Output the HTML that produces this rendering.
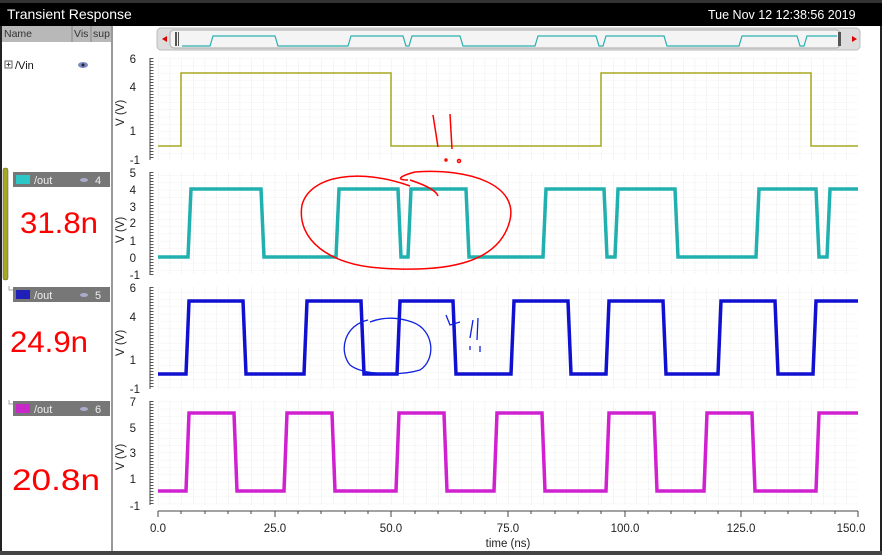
<!DOCTYPE html>
<html><head><meta charset="utf-8"><style>
body{margin:0;width:882px;height:555px;overflow:hidden;background:#fff;font-family:"Liberation Sans",sans-serif;}
</style></head><body>
<svg width="882" height="555" xmlns="http://www.w3.org/2000/svg" font-family="Liberation Sans, sans-serif">
<defs>
<pattern id="g" x="158" y="0" width="11.667" height="7.3" patternUnits="userSpaceOnUse">
<path d="M0 0V7.3" stroke="#dcdcdc" stroke-width="1" stroke-dasharray="1 1"/>
<path d="M0 0H11.667" stroke="#e6e6e6" stroke-width="1" stroke-dasharray="1 1"/>
</pattern>
</defs>
<rect width="882" height="555" fill="#fff"/>
<rect x="0" y="0" width="882" height="26" fill="#000"/>
<rect x="0" y="0" width="882" height="3" fill="#333"/>
<text x="7" y="19" fill="#fff" font-size="14">Transient Response</text>
<text x="708" y="19" fill="#fff" font-size="12.5">Tue Nov 12 12:38:56 2019</text>
<rect x="0" y="26" width="2" height="529" fill="#222"/>
<rect x="880" y="26" width="2" height="529" fill="#222"/>
<rect x="0" y="551" width="882" height="4" fill="#444"/>
<rect x="2" y="26" width="110" height="16" fill="#b8b8b8"/>
<text x="4" y="37" font-size="10.5" fill="#333">Name</text>
<line x1="72" y1="26" x2="72" y2="42" stroke="#888"/>
<line x1="91" y1="26" x2="91" y2="42" stroke="#888"/>
<text x="74" y="37" font-size="10.5" fill="#333">Vis</text>
<text x="93" y="37" font-size="10.5" fill="#333">sup</text>
<line x1="112" y1="26" x2="112" y2="551" stroke="#999" stroke-width="2"/>
<rect x="5" y="61" width="7" height="7" fill="none" stroke="#666"/>
<path d="M6.5 64.5h4M8.5 62.5v4" stroke="#444"/>
<text x="15" y="69" font-size="11" fill="#111">/Vin</text>
<ellipse cx="83" cy="65" rx="5" ry="3" fill="#7a8ac0"/><circle cx="83" cy="65" r="1.5" fill="#223"/>
<rect x="3" y="168" width="5" height="112" rx="2" fill="#a8a820" stroke="#555" stroke-width="0.5"/>
<g font-size="11" fill="#eee">
<rect x="13" y="172" width="97" height="15" fill="#777"/><rect x="16" y="175" width="14" height="9" fill="#2cc8c8"/><text x="34" y="184">/out</text><text x="95" y="184">4</text><ellipse cx="84" cy="180" rx="4" ry="2" fill="#aac"/>
<rect x="13" y="287" width="97" height="15" fill="#777"/><rect x="16" y="290" width="14" height="9" fill="#2020b8"/><text x="34" y="299">/out</text><text x="95" y="299">5</text><ellipse cx="84" cy="295" rx="4" ry="2" fill="#aac"/>
<rect x="13" y="401" width="97" height="15" fill="#777"/><rect x="16" y="404" width="14" height="9" fill="#c828c8"/><text x="34" y="413">/out</text><text x="95" y="413">6</text><ellipse cx="84" cy="409" rx="4" ry="2" fill="#aac"/>
</g>
<path d="M9 286v4h4M9 400v4h4" stroke="#aaa" fill="none"/>
<g fill="#f00" font-size="30">
<text x="20" y="233" textLength="78" lengthAdjust="spacingAndGlyphs">31.8n</text>
<text x="10" y="352" textLength="78" lengthAdjust="spacingAndGlyphs">24.9n</text>
<text x="12" y="490" textLength="88" lengthAdjust="spacingAndGlyphs">20.8n</text>
</g>
<rect x="157" y="28" width="703" height="22" rx="4" fill="#ddd" stroke="#bbb"/>
<rect x="170" y="30" width="670" height="18" rx="4" fill="#f4f4f4" stroke="#aaa"/>
<path d="M162 39l5-3v6z" fill="#d00"/><path d="M852 36l5 3-5 3z" fill="#d00"/>
<rect x="175" y="32" width="2" height="14" fill="#555"/><rect x="178" y="32" width="1" height="14" fill="#555"/>
<rect x="838" y="32" width="3" height="14" fill="#555"/>
<path d="M182 46H210l3-10h62l3 10h70l3-10h52l3 10 3 0 3-10h48l3 10h72l3-10h58l3 10 4 0 3-10h58l3 10h72l3-10h55l3 10 4 0 3-10h30" fill="none" stroke="#2ab0b0" stroke-width="1.2"/>
<rect x="158" y="58" width="700" height="102" fill="url(#g)"/>
<rect x="158" y="172" width="700" height="102" fill="url(#g)"/>
<rect x="158" y="287" width="700" height="102" fill="url(#g)"/>
<rect x="158" y="401" width="700" height="104" fill="url(#g)"/>
<g stroke="#444" stroke-width="1">
<line x1="150" y1="58" x2="150" y2="160"/><line x1="150" y1="172" x2="150" y2="275"/><line x1="150" y1="287" x2="150" y2="389"/><line x1="150" y1="401" x2="150" y2="505"/>
</g>
<g stroke="#555" stroke-dasharray="1 2" stroke-width="3">
<line x1="152" y1="58" x2="152" y2="160"/><line x1="152" y1="172" x2="152" y2="275"/><line x1="152" y1="287" x2="152" y2="389"/><line x1="152" y1="401" x2="152" y2="505"/>
</g>
<g font-size="11.5" fill="#222" text-anchor="end">
<text x="136" y="63">6</text><text x="136" y="91">4</text><text x="136" y="135">1</text><text x="140" y="164">-1</text>
<text x="136" y="177">5</text><text x="136" y="194">4</text><text x="136" y="211">3</text><text x="136" y="227">2</text><text x="136" y="245">1</text><text x="136" y="262">0</text><text x="140" y="279">-1</text>
<text x="136" y="292">6</text><text x="136" y="321">4</text><text x="136" y="364">1</text><text x="140" y="393">-1</text>
<text x="136" y="406">7</text><text x="136" y="432">5</text><text x="136" y="457">3</text><text x="136" y="483">1</text><text x="140" y="510">-1</text>
</g>
<g font-size="11.5" fill="#222">
<text transform="translate(124,126) rotate(-90)">V (V)</text>
<text transform="translate(124,243) rotate(-90)">V (V)</text>
<text transform="translate(124,356) rotate(-90)">V (V)</text>
<text transform="translate(124,470) rotate(-90)">V (V)</text>
</g>
<line x1="158" y1="511" x2="858" y2="511" stroke="#444"/>
<g stroke="#444"><path d="M158 511v6M181 511v3M205 511v3M228 511v3M251 511v3M275 511v6M298 511v3M321 511v3M345 511v3M368 511v3M391 511v6M415 511v3M438 511v3M461 511v3M485 511v3M508 511v6M531 511v3M555 511v3M578 511v3M601 511v3M625 511v6M648 511v3M671 511v3M695 511v3M718 511v3M741 511v6M765 511v3M788 511v3M811 511v3M835 511v3M858 511v6"/></g>
<g font-size="11.5" fill="#222" text-anchor="middle">
<text x="158" y="532">0.0</text><text x="275" y="532">25.0</text><text x="391" y="532">50.0</text><text x="508" y="532">75.0</text><text x="625" y="532">100.0</text><text x="741" y="532">125.0</text><text x="851" y="532">150.0</text>
<text x="508" y="547">time (ns)</text>
</g>
<path d="M158 146H181V73H391V146H601V73H811V146H858" fill="none" stroke="#a8a820" stroke-width="1.5"/>
<path d="M158 257H188L191 189H261L264 257H336L339 189H398L401 257H408L411 189H466L469 257H543L546 189H604L607 257H615L618 189H675L678 257H756L759 189H816L819 257H827L830 189H858" fill="none" stroke="#20b0b0" stroke-width="3.5"/>
<path d="M158 374H186L189 301H243L246 374H304L307 301H361L364 374H397L400 301H453L456 374H511L514 301H568L571 374H606L609 301H663L666 374H718L721 301H775L778 374H813L816 301H858" fill="none" stroke="#1010d0" stroke-width="3.5"/>
<path d="M158 491H186L189 413H234L237 491H284L287 413H332L335 491H396L399 413H444L447 491H494L497 413H542L545 491H606L609 413H654L657 491H704L707 413H752L755 491H816L819 413H858" fill="none" stroke="#d020d0" stroke-width="3.5"/>
<g fill="none" stroke="#f00" stroke-width="1.5">
<path d="M410 186C360 168 310 175 302 205C296 240 330 265 380 268C450 273 500 262 510 220C518 185 470 168 415 172C400 176 395 180 408 180"/>
<path d="M410 180C425 185 436 190 438 196"/>
<path d="M433 115L438 147M450 114L452 149"/>
<circle cx="446" cy="160" r="1"/><circle cx="459" cy="161" r="1.5"/>
</g>
<g fill="none" stroke="#1020e0" stroke-width="1.3">
<path d="M368 320C345 325 338 350 350 365C362 375 400 376 420 370C436 360 435 330 412 322C395 316 380 318 370 322"/>
<path d="M446 315L450 325L460 322M473 320L470 338M478 318L477 340M470 346L470 350M480 346L480 352"/>
</g>
</svg>
</body></html>
